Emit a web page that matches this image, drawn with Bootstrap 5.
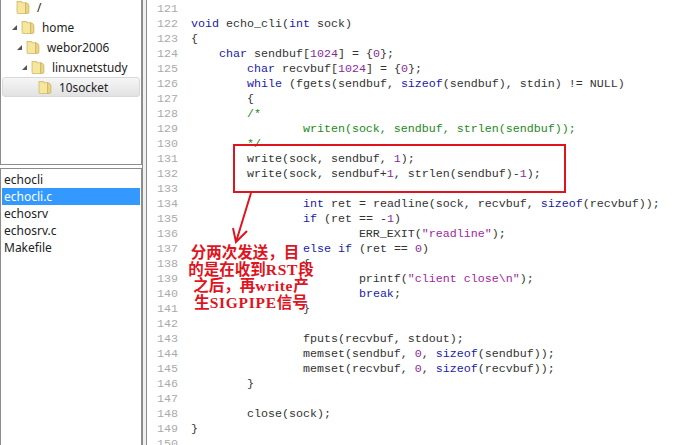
<!DOCTYPE html>
<html lang="zh"><head><meta charset="utf-8"><title>echocli.c</title>
<link href="https://cdn.jsdelivr.net/npm/bootstrap@5.3.0/dist/css/bootstrap.min.css" rel="stylesheet">
<style>
html,body{height:445px;overflow:hidden;background:#fff}
.frame{position:relative;width:686px;height:445px;overflow:hidden}
.sidebar{width:142px;font:11.8px/20px "Noto Sans",sans-serif;color:#222}
.pane{border:1px solid #8c8c8c;background:#fff}
.tree-pane{height:165px;border-top:0;margin-bottom:3px;overflow:hidden}
.file-pane{flex:1;border-bottom:0;padding:2px 1px 0}
.tree-row{height:20px;white-space:nowrap}
.tree-first{margin-top:-3px}
.tree-row svg,.tree-sel svg{flex:none}
.caret-mark{width:0;height:0;border-style:solid;border-width:0 0 5px 5px;border-color:transparent transparent #555;flex:none;margin-right:4px}
.tree-sel{height:20px;margin:0 1px;border:1px solid #d9d9d9;border-radius:3px;background:linear-gradient(#f6f6f6,#e2e2e2)}
.d0{padding-left:15px}.d1{padding-left:11px}.d2{padding-left:16px}.d3{padding-left:21px}.d4{padding-left:35px}
.gap-txt{margin-left:6px}
.file-row{height:17px;line-height:17px;padding:0 2px;font-size:12px;border:0;background:none;color:#222}
.file-on{background:#3399ff;color:#fff}
.splitter{width:5px;background:#f0f0f0;border-left:1px solid #8c8c8c;border-right:1px solid #8c8c8c}
.editor{flex:1;padding-top:2px;font:11.67px/15px "Liberation Mono",monospace;color:#333;white-space:pre}
.nums{width:44px;padding-left:10px;color:#aaa;flex:none}
.kw{color:#1a1aa6}.cm{color:#1c8a1c}.st{color:#a01fa0}.nm{color:#8a2a9a}
.red-box{position:absolute;left:233px;top:144px;width:333px;height:49px;border:2px solid #e0141e}
.arrow-mark{position:absolute;left:225px;top:190px}
.note{position:absolute;left:176px;top:245px;width:150px;text-align:center;color:#e0141e;font:700 15.5px/16.5px "Liberation Serif","Noto Sans CJK SC",serif}
.note-first{padding-right:12px}
.latin-run{letter-spacing:.7px}
</style></head><body>
<div class="frame d-flex">
 <div class="sidebar d-flex flex-column">
  <div class="pane tree-pane">
   <div class="tree-row tree-first d-flex align-items-center d0"><svg width="15" height="16" viewBox="0 0 14 14"><use href="#fold"/></svg><span class="gap-txt">/</span></div>
   <div class="tree-row d-flex align-items-center d1"><span class="caret-mark"></span><svg width="15" height="16" viewBox="0 0 14 14"><use href="#fold"/></svg><span class="gap-txt">home</span></div>
   <div class="tree-row d-flex align-items-center d2"><span class="caret-mark"></span><svg width="15" height="16" viewBox="0 0 14 14"><use href="#fold"/></svg><span class="gap-txt">webor2006</span></div>
   <div class="tree-row d-flex align-items-center d3"><span class="caret-mark"></span><svg width="15" height="16" viewBox="0 0 14 14"><use href="#fold"/></svg><span class="gap-txt">linuxnetstudy</span></div>
   <div class="tree-sel d-flex align-items-center d4"><svg width="15" height="16" viewBox="0 0 14 14"><use href="#fold"/></svg><span class="gap-txt">10socket</span></div>
  </div>
  <div class="pane file-pane">
   <div class="list-group list-group-flush">
    <div class="list-group-item file-row">echocli</div>
    <div class="list-group-item file-row file-on">echocli.c</div>
    <div class="list-group-item file-row">echosrv</div>
    <div class="list-group-item file-row">echosrv.c</div>
    <div class="list-group-item file-row">Makefile</div>
   </div>
  </div>
 </div>
 <div class="splitter"></div>
 <div class="editor d-flex">
<div class="nums">121
122
123
124
125
126
127
128
129
130
131
132
133
134
135
136
137
138
139
140
141
142
143
144
145
146
147
148
149
150</div><div>
<span class="kw">void</span> echo_cli(<span class="kw">int</span> sock)
{
    <span class="kw">char</span> sendbuf[<span class="nm">1024</span>] = {<span class="nm">0</span>};
        <span class="kw">char</span> recvbuf[<span class="nm">1024</span>] = {<span class="nm">0</span>};
        <span class="kw">while</span> (fgets(sendbuf, <span class="kw">sizeof</span>(sendbuf), stdin) != NULL)
        {
        <span class="cm">/*</span>
<span class="cm">                writen(sock, sendbuf, strlen(sendbuf));</span>
<span class="cm">        */</span>
        write(sock, sendbuf, <span class="nm">1</span>);
        write(sock, sendbuf+<span class="nm">1</span>, strlen(sendbuf)-<span class="nm">1</span>);

                <span class="kw">int</span> ret = readline(sock, recvbuf, <span class="kw">sizeof</span>(recvbuf));
                <span class="kw">if</span> (ret == -<span class="nm">1</span>)
                        ERR_EXIT(<span class="st">"readline"</span>);
                <span class="kw">else</span> <span class="kw">if</span> (ret == <span class="nm">0</span>)
                {
                        printf(<span class="st">"client close\n"</span>);
                        <span class="kw">break</span>;
                }

                fputs(recvbuf, stdout);
                memset(sendbuf, <span class="nm">0</span>, <span class="kw">sizeof</span>(sendbuf));
                memset(recvbuf, <span class="nm">0</span>, <span class="kw">sizeof</span>(recvbuf));
        }

        close(sock);
}</div>
 </div>
 <div class="red-box"></div>
 <svg class="arrow-mark" width="30" height="56" viewBox="0 0 30 56"><path d="M26 3 L11 52 M8 38 L11 52 L22 41" fill="none" stroke="#e0141e" stroke-width="2"/></svg>
 <div class="note"><div class="note-first">分两次发送，目</div><div>的是在收到<span class="latin-run">RST</span>段</div><div>之后，再<span class="latin-run">write</span>产</div><div>生<span class="latin-run">SIGPIPE</span>信号</div></div>
</div>
<svg width="0" height="0" class="d-block"><defs><symbol id="fold" viewBox="0 0 14 14"><path d="M1 2h4l1 1h3v10H2a1 1 0 0 1-1-1z" fill="#f7e79c" stroke="#d9c47a"/><path d="M9 3c2 1 3 1 3 3v6c0 1-1 1-3 1z" fill="#eed77f" stroke="#c9b26a" stroke-width=".8"/></symbol></defs></svg>
</body></html>
